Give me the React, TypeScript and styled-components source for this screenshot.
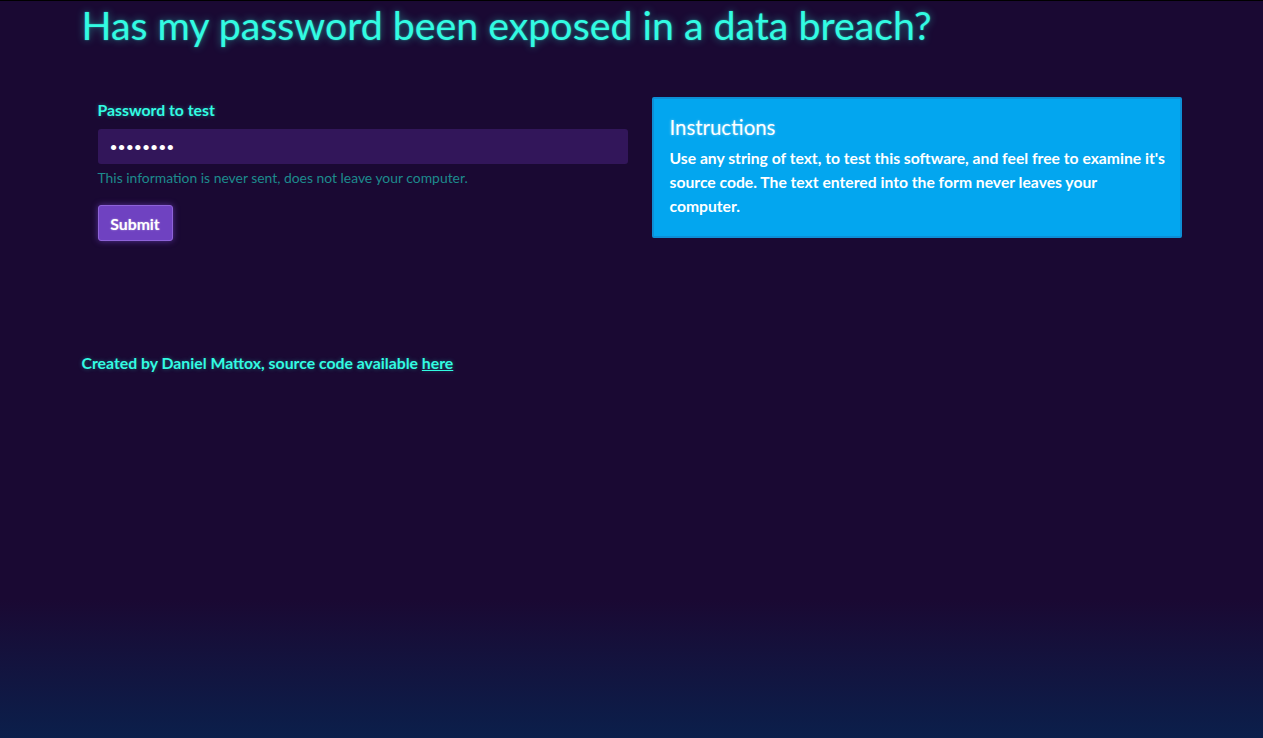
import React from "react"
import styled, { createGlobalStyle } from "styled-components"

const cyan = "#32fbe2"

const GlobalStyle = createGlobalStyle`
  html, body {
    margin: 0;
    padding: 0;
  }
  body {
    min-height: 100vh;
    font-family: Lato, "Open Sans", sans-serif;
    color: ${cyan};
    background-color: #1a0933;
    background-image: linear-gradient(
      to bottom,
      #000 0,
      #000 1px,
      #1a0933 1px,
      #1a0933 600px,
      #0b1f4b 738px
    );
    background-repeat: no-repeat;
  }
`

const Page = styled.main`
  width: 1100px;
  margin: 0 auto;
  padding-top: 1px;
`

const Title = styled.h1`
  margin: 0;
  font-size: 39.3px;
  font-weight: 400;
  line-height: 48px;
  color: ${cyan};
  text-shadow: 0 0 2px rgba(50, 251, 226, 0.5), 0 0 8px rgba(50, 251, 226, 0.45);
`

const Columns = styled.div`
  display: grid;
  grid-template-columns: 530px 530px;
  column-gap: 24px;
  padding: 48px 0 0 16px;
  align-items: start;
`

const Form = styled.form`
  display: flex;
  flex-direction: column;
  padding-top: 3px;
`

const Label = styled.label`
  font-size: 15.8px;
  font-weight: 700;
  line-height: 19px;
  margin-bottom: 10px;
  text-shadow: 0 0 4px rgba(50, 251, 226, 0.35);
`

const Input = styled.input`
  box-sizing: border-box;
  height: 35px;
  width: 100%;
  border: none;
  border-radius: 3px;
  background: #32165a;
  color: #fff;
  padding: 0 12px;
  font-family: Lato, sans-serif;
  font-size: 14px;
  letter-spacing: 0;
  outline: none;
`

const Help = styled.small`
  margin-top: 5px;
  font-size: 13.9px;
  line-height: 18px;
  color: #1d8b8d;
`

const SubmitButton = styled.button`
  align-self: flex-start;
  margin-top: 18px;
  height: 36px;
  width: 75px;
  padding: 0;
  border: 1px solid #8e63d9;
  border-radius: 3px;
  background: #6f42c1;
  color: #fff;
  font-family: Lato, sans-serif;
  font-size: 15.8px;
  font-weight: 700;
  text-shadow: 0 0 2px rgba(255, 255, 255, 0.5);
  box-shadow: 0 0 6px rgba(111, 66, 193, 0.7);
`

const Card = styled.section`
  box-sizing: border-box;
  background: #03a6ef;
  border: 2px solid #0d8fd6;
  border-radius: 2px;
  padding: 16px 12px 18px 16px;
  color: #fff;
`

const CardTitle = styled.h4`
  margin: 0 0 7px;
  font-size: 20.4px;
  font-weight: 400;
  line-height: 24px;
  text-shadow: 0 0 3px rgba(255, 255, 255, 0.5);
`

const CardText = styled.p`
  margin: 0;
  font-size: 15.7px;
  font-weight: 700;
  line-height: 24px;
`

const Footer = styled.footer`
  padding-top: 112px;
  font-size: 15.8px;
  font-weight: 700;
  line-height: 20px;
  text-shadow: 0 0 4px rgba(50, 251, 226, 0.35);

  a {
    color: ${cyan};
    text-decoration: underline;
  }
`

export default function App() {
  return (
    <>
      <GlobalStyle />
      <Page>
        <Title>Has my password been exposed in a data breach?</Title>
        <Columns>
          <Form onSubmit={(e) => e.preventDefault()}>
            <Label htmlFor="pw">Password to test</Label>
            <Input id="pw" type="password" defaultValue="password" />
            <Help>This information is never sent, does not leave your computer.</Help>
            <SubmitButton type="submit">Submit</SubmitButton>
          </Form>
          <Card>
            <CardTitle>Instructions</CardTitle>
            <CardText>
              Use any string of text, to test this software, and feel free to examine it's
              source code. The text entered into the form never leaves your computer.
            </CardText>
          </Card>
        </Columns>
        <Footer>
          Created by Daniel Mattox, source code available <a href="#">here</a>
        </Footer>
      </Page>
    </>
  )
}
